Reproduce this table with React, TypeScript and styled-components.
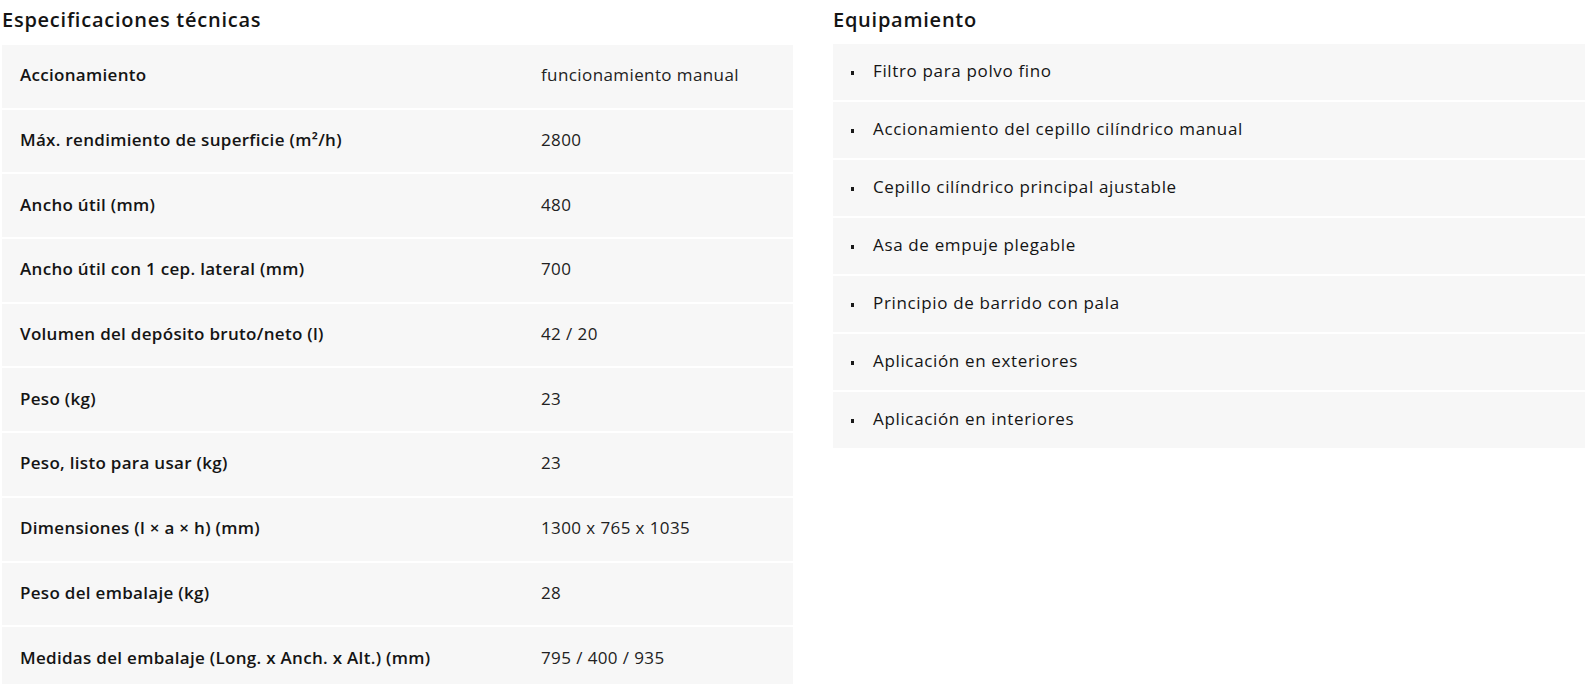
import styled, { createGlobalStyle } from 'styled-components';

const GlobalStyle = createGlobalStyle`
	*, *::before, *::after {
		box-sizing: border-box;
	}
	body {
		margin: 0;
		background: #ffffff;
		font-family: 'Open Sans', 'Noto Sans', sans-serif;
		color: #1a1a1a;
	}
`;

const specs: [string, string][] = [
	['Accionamiento', 'funcionamiento manual'],
	['Máx. rendimiento de superficie (m²/h)', '2800'],
	['Ancho útil (mm)', '480'],
	['Ancho útil con 1 cep. lateral (mm)', '700'],
	['Volumen del depósito bruto/neto (l)', '42 / 20'],
	['Peso (kg)', '23'],
	['Peso, listo para usar (kg)', '23'],
	['Dimensiones (l × a × h) (mm)', '1300 x 765 x 1035'],
	['Peso del embalaje (kg)', '28'],
	['Medidas del embalaje (Long. x Anch. x Alt.) (mm)', '795 / 400 / 935'],
];

const equipment = [
	'Filtro para polvo fino',
	'Accionamiento del cepillo cilíndrico manual',
	'Cepillo cilíndrico principal ajustable',
	'Asa de empuje plegable',
	'Principio de barrido con pala',
	'Aplicación en exteriores',
	'Aplicación en interiores',
];

const Page = styled.div`
	display: flex;
	gap: 40px;
	padding-left: 2px;
	height: 684px;
	overflow: hidden;
`;

const Column = styled.section<{ $width?: string }>`
	display: flex;
	flex-direction: column;
	width: ${(p) => p.$width || 'auto'};
	flex: ${(p) => (p.$width ? 'none' : '1')};
`;

const Title = styled.h2<{ $offset: number }>`
	flex: none;
	margin: 0;
	height: ${(p) => p.$offset}px;
	line-height: 40px;
	font-size: 20px;
	font-weight: 600;
	letter-spacing: 0.75px;
	color: #141414;
`;

const SpecTable = styled.div`
	display: flex;
	flex-direction: column;
	flex: none;
`;

const SpecRow = styled.div`
	display: grid;
	grid-template-columns: 521px 1fr;
	align-items: center;
	flex: none;
	height: 64.7px;
	padding: 0 0 3px 18px;
	background: #f7f7f7;
	border-bottom: 2px solid #ffffff;
	font-size: 17px;
`;

const Label = styled.span`
	font-weight: 600;
	letter-spacing: 0.3px;
	color: #141414;
`;

const Value = styled.span`
	font-weight: 400;
	letter-spacing: 0.4px;
	color: #222222;
`;

const List = styled.ul`
	margin: 0;
	padding: 0;
	list-style: none;
`;

const Item = styled.li`
	display: flex;
	align-items: center;
	gap: 19px;
	height: 58px;
	padding: 0 0 4px 18px;
	background: #f7f7f7;
	border-bottom: 2px solid #ffffff;
	font-size: 17px;
	font-weight: 500;
	letter-spacing: 0.65px;
	color: #141414;

	&::before {
		content: '';
		width: 3px;
		height: 4px;
		margin-top: 5px;
		background: #1a1a1a;
		flex: none;
	}
`;

export default function App() {
	return (
		<>
			<GlobalStyle />
			<Page>
				<Column $width="791px">
					<Title $offset={45}>Especificaciones técnicas</Title>
					<SpecTable>
						{specs.map(([label, value]) => (
							<SpecRow key={label}>
								<Label>{label}</Label>
								<Value>{value}</Value>
							</SpecRow>
						))}
					</SpecTable>
				</Column>
				<Column>
					<Title $offset={44}>Equipamiento</Title>
					<List>
						{equipment.map((item) => (
							<Item key={item}>{item}</Item>
						))}
					</List>
				</Column>
			</Page>
		</>
	);
}
